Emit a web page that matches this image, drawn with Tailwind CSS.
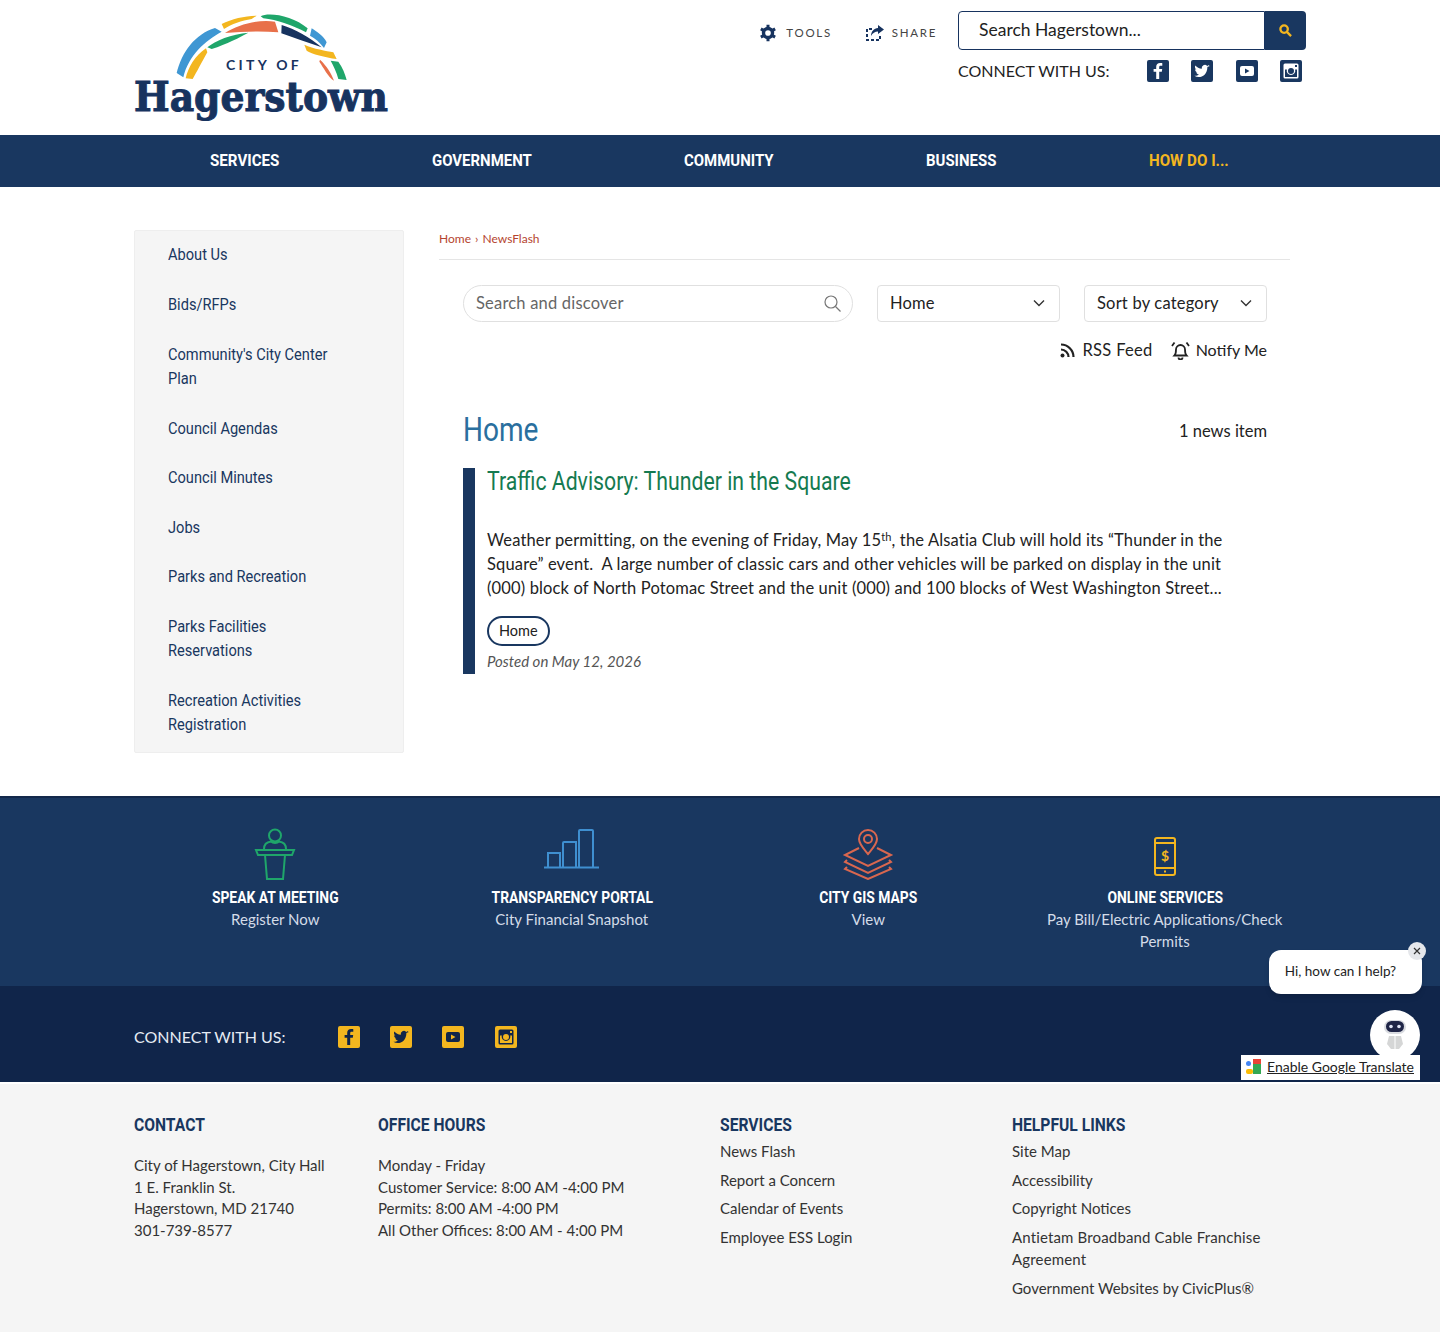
<!DOCTYPE html>
<html lang="en">
<head>
  <meta charset="UTF-8">
  <title>City of Hagerstown - NewsFlash</title>
  <script src="https://cdn.jsdelivr.net/npm/@tailwindcss/browser@4"></script>
</head>
<body class="relative bg-white text-[#222] font-['Lato',sans-serif]">
  <!-- shared social glyphs -->
  <svg class="hidden">
    <symbol id="ic-fb" viewBox="0 0 22 22"><path fill="currentColor" fill-rule="evenodd" d="M2 0h18a2 2 0 0 1 2 2v18a2 2 0 0 1-2 2H2a2 2 0 0 1-2-2V2a2 2 0 0 1 2-2zm10.200 19v-7.200h2.600l.4-2.900h-3V7.200c0-.8.3-1.400 1.500-1.400h1.600V3.200c-.3 0-1.200-.1-2.300-.1-2.300 0-3.800 1.400-3.800 3.900v1.900H6.600v2.900h2.600V19z"/></symbol>
    <symbol id="ic-tw" viewBox="0 0 22 22"><path fill="currentColor" fill-rule="evenodd" d="M2 0h18a2 2 0 0 1 2 2v18a2 2 0 0 1-2 2H2a2 2 0 0 1-2-2V2a2 2 0 0 1 2-2zm16.500 6.300c-.6.300-1.200.4-1.800.5.600-.4 1.100-1 1.400-1.700-.6.400-1.300.6-2 .8a3.100 3.100 0 0 0-5.300 2.800C8.200 8.600 5.900 7.400 4.400 5.500c-.8 1.400-.4 3.200 1 4.100-.5 0-1-.2-1.400-.4 0 1.500 1.100 2.800 2.500 3.100-.5.100-.9.100-1.400 0 .4 1.200 1.500 2.100 2.900 2.100-1.300 1-3 1.500-4.600 1.300 4.700 3 12.800.8 13-8.800.6-.4 1.100-1 1.600-1.600z"/></symbol>
    <symbol id="ic-yt" viewBox="0 0 22 22"><path fill="currentColor" fill-rule="evenodd" d="M2 0h18a2 2 0 0 1 2 2v18a2 2 0 0 1-2 2H2a2 2 0 0 1-2-2V2a2 2 0 0 1 2-2zm4 6a2 2 0 0 0-2 2v6a2 2 0 0 0 2 2h10a2 2 0 0 0 2-2V8a2 2 0 0 0-2-2zm3 2.500 4.500 2.500L9 13.500z"/></symbol>
    <symbol id="ic-ig" viewBox="0 0 22 22"><path fill="currentColor" fill-rule="evenodd" d="M2 0h18a2 2 0 0 1 2 2v18a2 2 0 0 1-2 2H2a2 2 0 0 1-2-2V2a2 2 0 0 1 2-2zm3 3.500A1.500 1.500 0 0 0 3.500 5v12A1.500 1.500 0 0 0 5 18.500h12a1.500 1.500 0 0 0 1.500-1.500V5A1.500 1.500 0 0 0 17 3.500zM15 5h2v2h-2zM5 9.500h1.900a4.300 4.300 0 1 0 8.200 0H17V17H5zM11 8a3 3 0 1 1 0 6 3 3 0 0 1 0-6z"/></symbol>
  </svg>

  <header class="h-[135px] w-[1172px] mx-auto flex justify-between">
    <svg class="mt-[11px] w-[256px] h-[115px] overflow-visible" viewBox="42 36 768 345">
      <path fill="#3f97d3" d="M170 222C185 160 225 105 285 87L305 98C255 125 205 170 190 235Z"/>
      <path fill="#f3b61f" d="M197 238C205 205 225 170 258 148L262 160C245 190 230 220 218 240Z"/>
      <path fill="#1fa66a" d="M262 145C285 125 335 105 385 101C360 115 320 135 275 150Z"/>
      <path fill="#f3b61f" d="M305 75C335 60 375 50 410 50L395 60C365 65 335 75 312 90Z"/>
      <path fill="#e8704a" d="M315 102C355 75 420 60 465 68L475 100C420 95 365 98 315 102Z"/>
      <path fill="#1fa66a" d="M422 52C445 38 520 50 563 88L558 100C520 80 470 62 430 58Z"/>
      <path fill="#17335f" d="M485 78C525 90 570 115 605 145C560 130 520 115 484 103Z"/>
      <path fill="#3f97d3" d="M575 88C590 98 612 112 620 130L612 147C600 130 585 118 570 110Z"/>
      <path fill="#f3b61f" d="M553 137C580 150 620 155 640 160L650 180C615 175 575 165 560 155Z"/>
      <path fill="#e8704a" d="M600 182C620 200 635 225 642 245C625 235 610 205 598 188Z"/>
      <path fill="#1fa66a" d="M632 185L655 188C668 205 675 225 680 243L655 240C650 220 640 200 632 185Z"/>
      <text x="318" y="214" font-family="Lato" font-weight="700" font-size="42" fill="#17335f" textLength="218">CITY OF</text>
      <text x="42" y="336" font-family="DejaVu Serif" font-weight="700" font-size="122" fill="#17335f" stroke="#17335f" stroke-width="3" textLength="762" lengthAdjust="spacingAndGlyphs">Hagerstown</text>
    </svg>

    <div class="flex items-start">
      <div class="flex items-center h-[39px] mt-[13px] text-[11.500px] tracking-[1.700px] text-[#444]">
        <svg class="w-[18px] h-[18px] mr-[9px] text-[#17335f]" viewBox="0 0 24 24" fill="none" stroke="currentColor" stroke-width="4.500"><circle cx="12" cy="12" r="6"/><path stroke-width="4" d="M12 1v4M12 19v4M2.500 6.500l3.500 2M18 15.500l3.500 2M2.500 17.500l3.500-2M18 8.500l3.500-2"/></svg>
        <span class="mr-[33px]">TOOLS</span>
        <svg class="w-[20px] h-[18px] mr-[7px] text-[#17335f]" viewBox="0 0 20 18" fill="none" stroke="currentColor" stroke-width="2"><path stroke-dasharray="3 2" d="M7 5H2v11h13v-4"/><path fill="currentColor" stroke="none" d="M13 1l6 4.500L13 10V7.500C10 7.500 7.500 9 6 12c0-4.500 3-7.500 7-8z"/></svg>
        <span class="mr-[21px]">SHARE</span>
      </div>
      <div class="w-[348px] pt-[11px]">
        <div class="flex h-[39px]">
          <div class="flex-1 border border-[#17335f] rounded-l-[4px] pl-[20px] flex items-center text-[17.500px]">Search Hagerstown...</div>
          <div class="w-[41px] bg-[#193760] rounded-r-[4px] flex items-center justify-center">
            <svg class="w-[13px] h-[13px] text-[#f3b61f]" viewBox="0 0 14 14" fill="none" stroke="currentColor" stroke-width="2.500"><circle cx="5.500" cy="5.500" r="4"/><path d="M8.500 8.500l4.500 4.500"/></svg>
          </div>
        </div>
        <div class="flex items-center h-[22px] mt-[10px] text-[16px]">
          <span class="w-[189px]">CONNECT WITH US:</span>
          <div class="flex gap-[22.300px] text-[#193760]">
            <svg class="w-[22px] h-[22px]"><use href="#ic-fb"/></svg>
            <svg class="w-[22px] h-[22px]"><use href="#ic-tw"/></svg>
            <svg class="w-[22px] h-[22px]"><use href="#ic-yt"/></svg>
            <svg class="w-[22px] h-[22px]"><use href="#ic-ig"/></svg>
          </div>
        </div>
      </div>
    </div>
  </header>

  <!-- no condensed family installed, so Roboto gets squeezed with scale-x -->
  <nav class="h-[52px] bg-[#193760] flex items-center justify-center gap-[152px] font-['Roboto',sans-serif] font-bold text-[17px] text-white">
    <a class="w-[70px] whitespace-nowrap origin-left scale-x-[.89]">SERVICES</a>
    <a class="w-[100px] whitespace-nowrap origin-left scale-x-[.88]">GOVERNMENT</a>
    <a class="w-[90px] whitespace-nowrap origin-left scale-x-[.88]">COMMUNITY</a>
    <a class="w-[71px] whitespace-nowrap origin-left scale-x-[.88]">BUSINESS</a>
    <a class="w-[81px] whitespace-nowrap origin-left scale-x-[.89] text-[#f3b61f]">HOW DO I...</a>
  </nav>

  <main class="w-[1172px] mx-auto flex gap-[35px] pt-[43px] pb-[43px] items-start">
    <aside class="w-[270px] h-[523px] bg-[#f5f5f5] border border-[#eeeeee] rounded-[2px] pl-[33px] text-[#193760] font-['Roboto',sans-serif] text-[17px] leading-[24.400px]">
      <ul class="w-[200px] origin-left scale-x-[.86]">
        <li class="pt-[11px] pb-[13px]">About Us</li>
        <li class="py-[12.600px]">Bids/RFPs</li>
        <li class="py-[12.600px]">Community's City Center Plan</li>
        <li class="py-[12.600px]">Council Agendas</li>
        <li class="py-[12.600px]">Council Minutes</li>
        <li class="py-[12.600px]">Jobs</li>
        <li class="py-[12.600px]">Parks and Recreation</li>
        <li class="py-[12.600px]">Parks Facilities Reservations</li>
        <li class="py-[12.600px]">Recreation Activities Registration</li>
      </ul>
    </aside>

    <section class="w-[851px]">
      <div class="h-[30px] border-b border-[#e5e5e5] pt-[1px] text-[12px] leading-[16px] text-[#b5442f]">Home <span class="mx-[1px]">›</span> NewsFlash</div>
      <div class="pl-[24px] pr-[23px]">
        <div class="flex mt-[25px] h-[37px] text-[16.500px] tracking-[0.200px]">
          <div class="w-[390px] border border-[#e0e0e0] rounded-full pl-[12px] pr-[11px] pb-[1px] flex items-center justify-between text-[#666]">
            Search and discover
            <svg class="w-[17px] h-[17px] text-[#777]" viewBox="0 0 17 17" fill="none" stroke="currentColor" stroke-width="1.200"><circle cx="7" cy="7" r="6"/><path d="M11.500 11.500l5 5"/></svg>
          </div>
          <div class="w-[183px] ml-[24px] border border-[#e0e0e0] rounded-[4px] pl-[12px] pr-[14px] pb-[1px] flex items-center justify-between">
            Home
            <svg class="w-[12px] h-[8px]" viewBox="0 0 12 8" fill="none" stroke="#333" stroke-width="1.400"><path d="M1 1.500l5 5 5-5"/></svg>
          </div>
          <div class="w-[183px] ml-[24px] border border-[#e0e0e0] rounded-[4px] pl-[12px] pr-[14px] pb-[1px] flex items-center justify-between">
            Sort by category
            <svg class="w-[12px] h-[8px]" viewBox="0 0 12 8" fill="none" stroke="#333" stroke-width="1.400"><path d="M1 1.500l5 5 5-5"/></svg>
          </div>
        </div>
        <div class="flex justify-end items-center h-[24px] mt-[16px] text-[16.500px]">
          <svg class="w-[15px] h-[15px] mr-[7px]" viewBox="0 0 15 15" fill="none" stroke="#222" stroke-width="2.200"><circle cx="2.500" cy="12.500" r="2" fill="#222" stroke="none"/><path d="M1 6.500a7.500 7.500 0 0 1 7.500 7.500M1 1.500A12.500 12.500 0 0 1 13.500 14"/></svg>
          <span class="tracking-[0.300px]">RSS Feed</span>
          <svg class="w-[19px] h-[19px] ml-[18px] mr-[6px]" viewBox="0 0 19 19" fill="none" stroke="#222" stroke-width="1.800"><path d="M3.500 14.500c1-1 1.500-2 1.500-6a4.500 4.500 0 0 1 9 0c0 4 .5 5 1.500 6z"/><path d="M7.500 16.500a2 2 0 0 0 4 0M3.500 1.500L1 5M15.500 1.500L18 5"/></svg>
          <span class="text-[16px]">Notify Me</span>
        </div>
        <div class="flex justify-between items-center mt-[48px] h-[40px]">
          <h2 class="font-['Roboto',sans-serif] text-[33px] text-[#2a6f9e] origin-left scale-x-[.85]">Home</h2>
          <span class="text-[16.500px] mt-[3px]">1 news item</span>
        </div>
        <article class="mt-[18px] h-[206px] border-l-[12px] border-[#193760] pl-[12px]">
          <h3 class="font-['Roboto',sans-serif] text-[25px] leading-[28px] mt-[2px] text-[#157a50] whitespace-nowrap origin-left scale-x-[.85]">Traffic Advisory: Thunder in the Square</h3>
          <p class="mt-[32px] text-[16.500px] tracking-[0.150px] leading-[24px] w-[768px]">Weather permitting, on the evening of Friday, May 15<sup class="text-[11px]">th</sup>, the Alsatia Club will hold its “Thunder in the Square” event.&nbsp; A large number of classic cars and other vehicles will be parked on display in the unit (000) block of North Potomac Street and the unit (000) and 100 blocks of West Washington Street...</p>
          <span class="inline-block mt-[16px] h-[30px] px-[10px] border-[2.500px] border-[#193760] rounded-full text-[14.500px] leading-[25px]">Home</span>
          <p class="mt-[5px] text-[15px] leading-[20px] italic text-[#555]">Posted on May 12, 2026</p>
        </article>
      </div>
    </section>
  </main>

  <section class="h-[190px] bg-[#193760] border-t-2 border-[#13294b] pt-[30px] flex justify-center text-center">
    <div class="w-[296.500px] px-[24px]">
      <svg class="mx-auto w-[60px] h-[52px] text-[#1fa66a]" viewBox="0 0 60 52" fill="none" stroke="currentColor" stroke-width="2"><circle cx="30" cy="7.500" r="6"/><path d="M19 21c0-5 3-7 7-7.500 2 2 6 2 8 0 4 .5 7 2.500 7 7.500"/><path d="M11 22h38l-2 5H13z"/><path d="M20 27l2 24h16l2-24"/></svg>
      <h4 class="mt-[5px] font-['Roboto',sans-serif] font-bold text-[17px] leading-[24px] text-white scale-x-[.815]">SPEAK AT MEETING</h4>
      <p class="text-[15px] leading-[22px] -mt-[1px] text-[#d4dce8]">Register Now</p>
    </div>
    <div class="w-[296.500px] px-[24px]">
      <svg class="mx-auto w-[60px] h-[52px] text-[#3f8fd0]" viewBox="0 0 60 52" fill="none" stroke="currentColor" stroke-width="2"><path d="M2 39.500h55" stroke-width="2"/><path d="M6 39V25h12v14M21 39V15a1 1 0 0 1 1-1h12v25M37 39V3a1 1 0 0 1 1-1h12a1 1 0 0 1 1 1v36"/></svg>
      <h4 class="mt-[5px] font-['Roboto',sans-serif] font-bold text-[17px] leading-[24px] text-white scale-x-[.815]">TRANSPARENCY PORTAL</h4>
      <p class="text-[15px] leading-[22px] -mt-[1px] text-[#d4dce8]">City Financial Snapshot</p>
    </div>
    <div class="w-[296.500px] px-[24px]">
      <svg class="mx-auto w-[60px] h-[52px] text-[#d9674f]" viewBox="0 0 60 52" fill="none" stroke="currentColor" stroke-width="2"><path d="M30 26c-5-6-9-10-9-15a9 9 0 0 1 18 0c0 5-4 9-9 15z"/><circle cx="30" cy="11" r="4"/><path d="M21 20L7 27l23 11 23-11-14-7"/><path d="M9 32l-2 2 23 11 23-11-2-2"/><path d="M9 39l-2 2 23 10 23-10-2-2"/></svg>
      <h4 class="mt-[5px] font-['Roboto',sans-serif] font-bold text-[17px] leading-[24px] text-white scale-x-[.815]">CITY GIS MAPS</h4>
      <p class="text-[15px] leading-[22px] -mt-[1px] text-[#d4dce8]">View</p>
    </div>
    <div class="w-[296.500px] px-[24px]">
      <svg class="mx-auto w-[60px] h-[52px] text-[#f3b61f]" viewBox="0 0 60 52" fill="none" stroke="currentColor" stroke-width="2"><rect x="20" y="10" width="20" height="37" rx="2"/><path d="M20 15h20M20 40h20M29 43.500h2"/><text x="30" y="33" text-anchor="middle" font-family="Lato" font-weight="700" font-size="14" fill="currentColor" stroke="none">$</text></svg>
      <h4 class="mt-[5px] font-['Roboto',sans-serif] font-bold text-[17px] leading-[24px] text-white scale-x-[.815]">ONLINE SERVICES</h4>
      <p class="text-[15px] leading-[22px] -mt-[1px] text-[#d4dce8]">Pay Bill/Electric Applications/Check Permits</p>
    </div>
  </section>

  <section class="h-[96px] bg-[#10254a]">
    <div class="w-[1172px] h-full mx-auto flex items-center pt-[6px] text-[16px] text-[#e6ecf4]">
      <span class="w-[204px]">CONNECT WITH US:</span>
      <div class="flex gap-[30px] text-[#f3b61f]">
        <svg class="w-[22px] h-[22px]"><use href="#ic-fb"/></svg>
        <svg class="w-[22px] h-[22px]"><use href="#ic-tw"/></svg>
        <svg class="w-[22px] h-[22px]"><use href="#ic-yt"/></svg>
        <svg class="ml-[1px] w-[22px] h-[22px]"><use href="#ic-ig"/></svg>
      </div>
    </div>
  </section>

  <footer class="h-[250px] bg-[#f5f5f5] border-t-2 border-white text-[15px] leading-[21.700px] text-[#333]">
    <div class="w-[1172px] mx-auto flex pt-[29px]">
      <div class="w-[244px]">
        <h5 class="font-['Roboto',sans-serif] font-bold text-[18px] leading-[24px] text-[#193760] origin-left scale-x-[.87]">CONTACT</h5>
        <p class="mt-[18px]">City of Hagerstown, City Hall<br>1 E. Franklin St.<br>Hagerstown, MD 21740<br>301-739-8577</p>
      </div>
      <div class="w-[342px]">
        <h5 class="font-['Roboto',sans-serif] font-bold text-[18px] leading-[24px] text-[#193760] origin-left scale-x-[.87]">OFFICE HOURS</h5>
        <p class="mt-[18px]">Monday - Friday<br>Customer Service: 8:00 AM -4:00 PM<br>Permits: 8:00 AM -4:00 PM<br>All Other Offices: 8:00 AM - 4:00 PM</p>
      </div>
      <div class="w-[292px]">
        <h5 class="font-['Roboto',sans-serif] font-bold text-[18px] leading-[24px] text-[#193760] origin-left scale-x-[.87]">SERVICES</h5>
        <ul class="mt-[4px] space-y-[7px]">
          <li>News Flash</li>
          <li>Report a Concern</li>
          <li>Calendar of Events</li>
          <li>Employee ESS Login</li>
        </ul>
      </div>
      <div class="w-[270px]">
        <h5 class="font-['Roboto',sans-serif] font-bold text-[18px] leading-[24px] text-[#193760] origin-left scale-x-[.87]">HELPFUL LINKS</h5>
        <ul class="mt-[4px] space-y-[7px]">
          <li>Site Map</li>
          <li>Accessibility</li>
          <li>Copyright Notices</li>
          <li class="tracking-[0.150px]">Antietam Broadband Cable Franchise Agreement</li>
          <li>Government Websites by CivicPlus®</li>
        </ul>
      </div>
    </div>
  </footer>

  <!-- chat widget + translate bar float over the page -->
  <div class="absolute left-[1269px] top-[950px] w-[153px] h-[44px] bg-white rounded-[12px] shadow-md flex items-center justify-center pb-[2px] pr-[10px] text-[13.500px]">Hi, how can I help?</div>
  <div class="absolute left-[1408px] top-[942px] w-[18px] h-[18px] rounded-full bg-[#e5e7eb] flex items-center justify-center">
    <svg class="w-[8px] h-[8px]" viewBox="0 0 8 8" stroke="#333" stroke-width="1.200"><path d="M1 1l6 6M7 1L1 7"/></svg>
  </div>
  <div class="absolute left-[1241px] top-[1055px] w-[179px] h-[25px] bg-white flex items-center pl-[4px] pb-[2px] text-[14px] text-[#222]">
    <svg class="w-[17px] h-[17px] mr-[5px] shrink-0" viewBox="0 0 17 17"><rect x="8" y="1" width="8" height="15" fill="#34a853"/><rect x="8" y="1" width="8" height="5" fill="#ea4335"/><rect x="1" y="3" width="5" height="5" rx="2.500" fill="#4285f4"/><rect x="1" y="11" width="7" height="5" rx="2" fill="#fbbc05"/></svg>
    <span class="underline whitespace-nowrap">Enable Google Translate</span>
  </div>
  <div class="absolute left-[1370px] top-[1010px] w-[50px] h-[50px] rounded-full bg-white flex items-center justify-center">
    <svg class="w-[28px] h-[34px]" viewBox="0 0 28 34"><rect x="3" y="2" width="22" height="14" rx="7" fill="#d9dbe0"/><rect x="5" y="3" width="18" height="11" rx="5.500" fill="#1f2547"/><circle cx="10" cy="8.500" r="1.800" fill="#dfe4f5"/><circle cx="18" cy="8.500" r="1.800" fill="#dfe4f5"/><path d="M8 18h12l2 8-4 5h-8l-4-5z" fill="#d5d6d6"/><path d="M14 18v13" stroke="#fff"/></svg>
  </div>
</body>
</html>
